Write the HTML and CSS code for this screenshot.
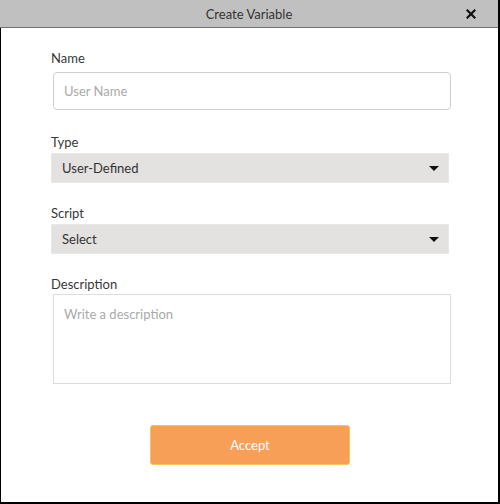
FILE: index.html
```html
<!DOCTYPE html>
<html>
<head>
<meta charset="utf-8">
<link rel="stylesheet" href="styles.css">
</head>
<body>
<div class="dialog">
  <div class="header">
    <span class="title">Create Variable</span>
    <svg class="close" width="10" height="10" viewBox="0 0 10 10"><path d="M1.5 1.5 L8.5 8.5 M8.5 1.5 L1.5 8.5" stroke="#111" stroke-width="2.2" stroke-linecap="square"/></svg>
  </div>
  <div class="body">
    <div class="field field-name">
      <label class="label">Name</label>
      <div class="input">User Name</div>
    </div>
    <div class="field">
      <label class="label label-tight">Type</label>
      <div class="select"><span>User-Defined</span><span class="caret"></span></div>
    </div>
    <div class="field">
      <label class="label label-tight">Script</label>
      <div class="select"><span>Select</span><span class="caret"></span></div>
    </div>
    <div class="field">
      <label class="label label-tighter">Description</label>
      <div class="textarea">Write a description</div>
    </div>
    <div class="actions">
      <button class="accept">Accept</button>
    </div>
  </div>
</div>
</body>
</html>
```
FILE: styles.css
```css
html, body { margin: 0; padding: 0; background: #fff; }
body { font-family: Lato, "Open Sans", sans-serif; font-size: 13px; color: #333; }
.dialog { width: 500px; height: 504px; box-sizing: border-box; display: flex; flex-direction: column; border-right: 2px solid #000; border-bottom: 2px solid #000; }
.header { height: 27px; flex: none; background: #c0c0c0; border-bottom: 1px solid #707070; display: flex; align-items: center; justify-content: center; position: relative; }
.title { color: #333; font-size: 13px; }
.close { position: absolute; right: 22px; top: 9px; }
.body { flex: 1; border-left: 1px solid #000; padding: 22px 49px 0 50px; display: flex; flex-direction: column; gap: 22px; }
.field { display: flex; flex-direction: column; }
.field-name { margin-bottom: 2px; }
.label { font-size: 13px; line-height: 16px; margin-bottom: 6px; color: #383838; }
.label-tight { margin-bottom: 3px; }
.label-tighter { margin-bottom: 2px; }
.input { margin-left: 2px; margin-right: -2px; border: 1px solid #cfcfcf; border-radius: 4px; box-sizing: border-box; height: 38px; padding-left: 10px; display: flex; align-items: center; color: #aaa; }
.select { height: 30px; box-sizing: border-box; background: #e3e2e1; border: 1px solid #e8e8e8; display: flex; align-items: center; justify-content: space-between; padding: 0 9px 0 10px; color: #333; }
.caret { width: 0; height: 0; border-left: 5px solid transparent; border-right: 5px solid transparent; border-top: 5px solid #111; }
.textarea { margin-left: 2px; margin-right: -2px; height: 90px; box-sizing: border-box; border: 1px solid #ddd; padding: 11px 10px; color: #aaa; font-size: 13px; }
.actions { display: flex; justify-content: center; margin-top: 19px; }
.accept { width: 200px; height: 40px; background: #f79e57; border: 1px solid #f2c363; border-radius: 3px; color: #fff; font-family: Lato, sans-serif; font-size: 13px; }
```
